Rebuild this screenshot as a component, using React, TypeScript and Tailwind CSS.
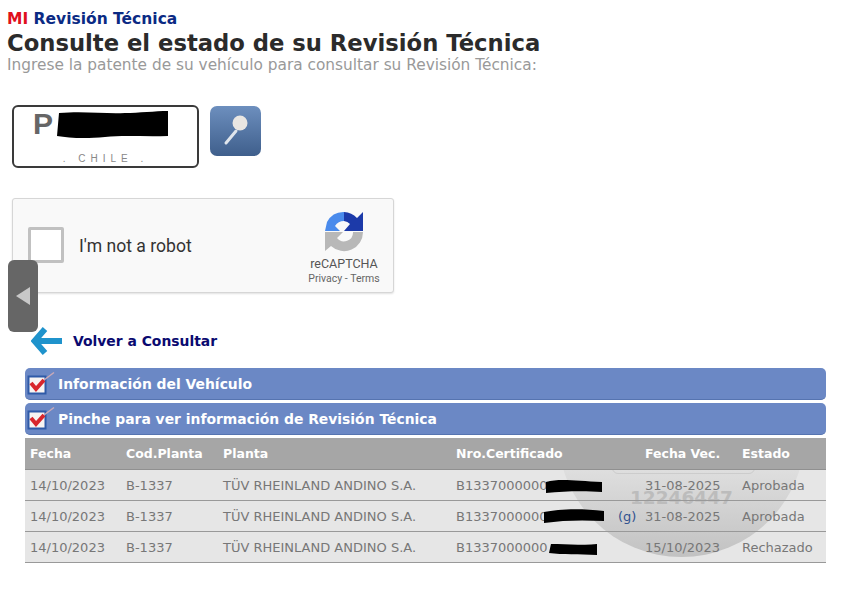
import React from "react";

const rows = [
  { cert: "B1337000000", g: false, vec: "31-08-2025", estado: "Aprobada", vb: "0 0 56 16", scribble: "M0 4 C14 0 30 3 56 4 L56 14 C40 13 20 13 0 15 Z", cls: "w-[56px] ml-[-2px] mt-[1px]" },
  { cert: "B1337000000", g: true, vec: "31-08-2025", estado: "Aprobada", vb: "0 0 60 16", scribble: "M0 4 C14 1 36 0 60 3 L60 13 C40 12 20 12 0 15 Z", cls: "w-[60px] ml-[-4px] mt-[-2px]" },
  { cert: "B1337000000", g: false, vec: "15/10/2023", estado: "Rechazado", vb: "0 0 49 16", scribble: "M2 3 C16 2 34 5 49 3 L49 14 C30 13 14 14 0 12 Z", cls: "w-[48px] ml-[1px] mt-[3px]" },
];

function CheckIcon() {
  return (
    <svg width="30" height="26" viewBox="0 0 30 26" className="shrink-0">
      <rect x="1.5" y="5.5" width="17" height="17" fill="#f7f4f2" stroke="#2f5aa8" strokeWidth="2" />
      <path d="M4 12 L9 18 L17 9" fill="none" stroke="#d8262c" strokeWidth="4" />
      <path d="M17 9 L27 1.5" fill="none" stroke="#c9a9b8" strokeWidth="1.5" />
    </svg>
  );
}

function Bar({ label }: { label: string }) {
  return (
    <div className="flex h-[32px] items-center rounded-[5px] border-b border-[#5674b0] bg-[#6b88c5] pl-[2px] text-[13.9px] font-bold text-white">
      <CheckIcon />
      <span className="ml-[1px] pt-[1px]">{label}</span>
    </div>
  );
}

export default function App() {
  return (
    <div className="relative h-[590px] w-[861px] overflow-hidden bg-white font-['DejaVu_Sans','Liberation_Sans',sans-serif]">
      <div className="pl-[7px] pt-[10px]">
        <p className="whitespace-nowrap text-[15.5px] font-bold leading-[18px] text-[#0b2a84]">
          <span className="text-[#e0101c]">MI</span> Revisión Técnica
        </p>
        <h1 className="whitespace-nowrap text-[22.7px] font-bold leading-[30px] text-[#2b2b2b]">Consulte el estado de su Revisión Técnica</h1>
        <p className="mt-[-2px] whitespace-nowrap text-[15.35px] leading-[18px] text-[#999999]">
          Ingrese la patente de su vehículo para consultar su Revisión Técnica:
        </p>
      </div>

      <div className="mt-[31px] flex items-start pl-[12px]">
        <div className="relative h-[63px] w-[187px] rounded-[6px] border-2 border-[#3a3a3a] bg-white">
          <span className="absolute left-[19px] top-[-1px] font-['Liberation_Sans',sans-serif] text-[30px] font-bold leading-[36px] text-[#666666]">P</span>
          <svg width="114" height="30" viewBox="0 0 114 30" className="absolute left-[41px] top-[3px]">
            <path d="M4 3 C30 1 50 4 70 3 C84 3 100 1 113 1 L113 26 C90 27 70 25 50 27 C30 29 14 28 2 26 Z" fill="#000" />
          </svg>
          <span className="absolute bottom-[1px] left-0 w-full whitespace-nowrap text-center font-['Liberation_Sans',sans-serif] text-[10px] leading-[12px] tracking-[5px] text-[#888888]">. CHILE .</span>
        </div>
        <div className="ml-[11px] mt-[1px] flex h-[50px] w-[51px] items-center justify-center rounded-[7px] bg-gradient-to-b from-[#6d8fbe] to-[#3f5f8c]">
          <svg width="30" height="36" viewBox="0 0 30 36" className="mt-[-2px]">
            <path d="M15 19 L5 31" stroke="#dfe5ec" strokeWidth="3" strokeLinecap="round" />
            <circle cx="19" cy="11" r="7.5" fill="#e9e6e2" />
          </svg>
        </div>
      </div>

      <div className="ml-[12px] mt-[30px] flex h-[95px] w-[382px] items-stretch rounded-[3px] border border-[#d6d6d6] bg-[#f9f9f9] shadow-[0_1px_2px_rgba(0,0,0,0.12)] font-['Roboto',sans-serif]">
        <div className="ml-[15px] mt-[28px] h-[36px] w-[36px] rounded-[2px] border-[3px] border-[#c1c1c1] bg-white" />
        <span className="ml-[15px] mt-[36px] whitespace-nowrap text-[17.6px] leading-[22px] text-[#333333]">I'm not a robot</span>
        <div className="ml-auto mr-[13px] flex w-[72px] flex-col items-center pt-[13px]">
          <svg width="38" height="40" viewBox="0 0 38 40">
            <path d="M19 0 A19 19 0 0 0 2 10 L0 19 L15 19 L10 14 A11 11 0 0 1 19 9 Z" fill="#4a8bec" />
            <path d="M19 0 A19 19 0 0 1 32 6 L38 0 L38 19 L19 19 L25 12 A9 9 0 0 0 19 9 Z" fill="#1c3aa9" />
            <path d="M38 20 A19 19 0 0 1 6 34 L0 39 L0 20 L18 20 L12 26 A9 9 0 0 0 28 20 Z" fill="#b8b8b8" />
          </svg>
          <span className="mt-[4px] whitespace-nowrap text-[12.5px] leading-[16px] text-[#555555]">reCAPTCHA</span>
          <span className="whitespace-nowrap text-[10.5px] leading-[13px] text-[#666666]">Privacy - Terms</span>
        </div>
      </div>

      <a className="ml-[31px] mt-[32px] flex h-[32px] items-center whitespace-nowrap text-[13.9px] font-bold text-[#0a0a70]">
        <svg width="31" height="28" viewBox="0 0 31 28" className="shrink-0">
          <path d="M14 2 L3.5 14 L14 26 M4 14 L31 14" fill="none" stroke="#1f93cc" strokeWidth="6" />
        </svg>
        <span className="ml-[11px]">Volver a Consultar</span>
      </a>

      <div className="relative mx-[25px] mt-[11px] w-[801px]">
        <div className="flex flex-col gap-[3px]">
          <Bar label="Información del Vehículo" />
          <Bar label="Pinche para ver información de Revisión Técnica" />
        </div>

        <div className="mt-[3px] text-[13px] text-[#777777]">
          <div className="grid h-[32px] grid-cols-[96px_97px_233px_162px_27px_97px_84px] items-center border-b border-[#909090] bg-[#a6a6a6] pl-[5px] pt-[1px] text-[12.5px] font-bold text-white">
            <span>Fecha</span>
            <span>Cod.Planta</span>
            <span>Planta</span>
            <span>Nro.Certificado</span>
            <span />
            <span>Fecha Vec.</span>
            <span>Estado</span>
          </div>
          <div className="relative overflow-hidden bg-[#e6e6e6]">
            <div className="absolute left-[533px] top-[-160px] h-[247px] w-[247px] rounded-full bg-gradient-to-b from-[#dedede] from-[65%] to-[#c2c2c2]" />
            <div className="absolute left-[587px] top-[-3px] h-[7px] w-[143px] rounded-b-[6px] border border-[#cccccc]" />
            <span className="absolute left-[605px] top-[15px] text-[18.5px] font-bold leading-[26px] text-[#bcbcbc]">12246447</span>
            {rows.map((r, i) => (
              <div
                key={i}
                className="relative grid h-[31px] grid-cols-[96px_97px_233px_162px_27px_97px_84px] items-center border-b border-[#999999] pl-[5px] pt-[1px] whitespace-nowrap"
              >
                <span>14/10/2023</span>
                <span>B-1337</span>
                <span>TÜV RHEINLAND ANDINO S.A.</span>
                <span className="flex items-center">
                  {r.cert}
                  <svg viewBox={r.vb} height="16" className={r.cls}>
                    <path d={r.scribble} fill="#000" />
                  </svg>
                </span>
                <span className="text-[#33538f]">{r.g ? "(g)" : ""}</span>
                <span>{r.vec}</span>
                <span>{r.estado}</span>
              </div>
            ))}
          </div>
        </div>
      </div>

      <div className="absolute left-[8px] top-[260px] flex h-[72px] w-[30px] items-center justify-center rounded-[6px] bg-[#666666]">
        <svg width="16" height="20" viewBox="0 0 16 20">
          <path d="M15 1 L1 10 L15 19 Z" fill="#c8c8c8" />
        </svg>
      </div>
    </div>
  );
}
